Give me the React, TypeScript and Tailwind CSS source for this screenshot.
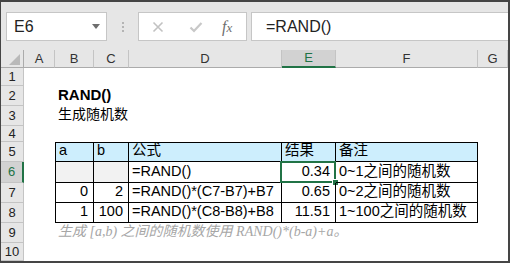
import React from 'react'

const cols = ['A', 'B', 'C', 'D', 'E', 'F', 'G']

// cell styles
const hdr = 'flex items-center justify-center border-r border-b border-[#c4c4c4] bg-[#e6e6e6] text-[13px] text-[#333]'
const rowHdr = 'flex items-center justify-center border-r border-b border-[#c4c4c4] bg-[#e6e6e6] text-[13px] text-[#222]'
const td = 'relative flex items-end pb-[2px] px-[3px] border-r border-b border-black whitespace-nowrap leading-[17px]'
const num = 'justify-end pr-[5px]'

function RowHeader({ n, active }: { n: number; active?: boolean }) {
  if (active) {
    return (
      <div className="flex items-center justify-center border-r-2 border-r-[#217346] border-b border-b-[#c4c4c4] bg-[#d2d2d2] text-[13px] text-[#217346]">
        {n}
      </div>
    )
  }
  return <div className={rowHdr}>{n}</div>
}

export default function App() {
  return (
    <div className="w-[510px] h-[263px] overflow-hidden border-t-2 border-l border-r-2 border-b-2 border-[#454545] bg-white font-['Liberation_Sans','Noto_Sans_CJK_SC',sans-serif] text-black">
      {/* formula bar */}
      <div className="h-[48px] bg-[#e6e6e6] flex items-start pl-[5px] pt-[10px]">
        <div className="w-[101px] h-[29px] bg-white border border-[#c6c6c6] flex items-center justify-between pl-[7px] pr-[6px]">
          <span className="text-[16px] text-[#222] leading-none">E6</span>
          <svg width="8" height="5" viewBox="0 0 8 5"><polygon points="0,0 8,0 4,5" fill="#6e6e6e" /></svg>
        </div>
        <div className="w-[31px] h-[29px] flex flex-col items-center justify-center gap-[2px]">
          <div className="w-[2px] h-[2px] bg-[#b4b4b4]" />
          <div className="w-[2px] h-[2px] bg-[#b4b4b4]" />
          <div className="w-[2px] h-[2px] bg-[#b4b4b4]" />
        </div>
        <div className="w-[109px] h-[29px] bg-white border border-[#c6c6c6] flex items-center pl-[13px]">
          <svg width="12" height="12" viewBox="0 0 12 12" className="mr-[25px]">
            <path d="M1.5 1.5 L10.5 10.5 M10.5 1.5 L1.5 10.5" stroke="#c2c2c2" strokeWidth="1.6" fill="none" />
          </svg>
          <svg width="14" height="12" viewBox="0 0 14 12" className="mr-[19px]">
            <path d="M1.5 6.5 L5 10 L12.5 2" stroke="#c8c8c8" strokeWidth="2.2" fill="none" />
          </svg>
          <span className="font-['Liberation_Serif',serif] italic text-[16px] text-[#6e6e6e] leading-none">
            f<span className="text-[13px]">x</span>
          </span>
        </div>
        <div className="flex-1 h-[29px] ml-[4px] bg-white border border-r-0 border-[#c6c6c6] flex items-center pl-[14px]">
          <span className="text-[16px] text-[#222] leading-none">=RAND()</span>
        </div>
      </div>

      {/* sheet */}
      <div className="grid grid-cols-[23px_31px_39px_35px_153px_54px_142px_30px] grid-rows-[18px_18px_20px_20px_16px_20px_21px_20px_20px_20px_18px] text-[14.5px]">
        {/* column headers */}
        <div className="relative border-r border-b border-[#ababab] bg-[#e6e6e6]">
          <svg width="11" height="11" viewBox="0 0 11 11" className="absolute right-[3px] bottom-[2px]">
            <polygon points="11,0 11,11 0,11" fill="#b9b9b9" />
          </svg>
        </div>
        {cols.map((c) =>
          c === 'E' ? (
            <div key={c} className="flex items-center justify-center border-r border-[#c4c4c4] border-b-2 border-b-[#217346] bg-[#d2d2d2] text-[13px] text-[#217346]">
              {c}
            </div>
          ) : (
            <div key={c} className={`${hdr} border-b-[#ababab]`}>{c}</div>
          )
        )}

        {/* row 1 */}
        <RowHeader n={1} />
        <div className="col-span-7" />

        {/* row 2 */}
        <RowHeader n={2} />
        <div />
        <div className="col-span-6 flex items-end pb-[3px] px-[3px] leading-[17px] font-bold text-[15px]">RAND()</div>

        {/* row 3 */}
        <RowHeader n={3} />
        <div />
        <div className="col-span-6 flex items-end pb-[3px] px-[3px] leading-[17px] text-[14px]">生成随机数</div>

        {/* row 4 */}
        <RowHeader n={4} />
        <div className="col-span-7" />

        {/* row 5 */}
        <RowHeader n={5} />
        <div />
        <div className={`${td} border-l border-t bg-[#cdeefd]`}>a</div>
        <div className={`${td} border-t bg-[#cdeefd]`}>b</div>
        <div className={`${td} border-t bg-[#cdeefd]`}>公式</div>
        <div className={`${td} border-t bg-[#cdeefd]`}>结果</div>
        <div className={`${td} border-t bg-[#cdeefd]`}>备注</div>
        <div />

        {/* row 6 */}
        <RowHeader n={6} active />
        <div />
        <div className={`${td} border-l bg-[#f2f2f2]`} />
        <div className={`${td} bg-[#f2f2f2]`} />
        <div className={td}>=RAND()</div>
        <div className={`${td} ${num}`}>
          0.34
          <div className="absolute -left-[2px] -top-[1px] -right-[1px] -bottom-[1px] border-2 border-[#217346]" />
          <div className="absolute -right-[4px] -bottom-[4px] w-[7px] h-[7px] bg-[#217346] border border-white" />
        </div>
        <div className={td}>0~1之间的随机数</div>
        <div />

        {/* row 7 */}
        <RowHeader n={7} />
        <div />
        <div className={`${td} border-l ${num}`}>0</div>
        <div className={`${td} ${num}`}>2</div>
        <div className={td}>=RAND()*(C7-B7)+B7</div>
        <div className={`${td} ${num}`}>0.65</div>
        <div className={td}>0~2之间的随机数</div>
        <div />

        {/* row 8 */}
        <RowHeader n={8} />
        <div />
        <div className={`${td} border-l ${num}`}>1</div>
        <div className={`${td} ${num}`}>100</div>
        <div className={td}>=RAND()*(C8-B8)+B8</div>
        <div className={`${td} ${num}`}>11.51</div>
        <div className={td}>1~100之间的随机数</div>
        <div />

        {/* row 9 */}
        <RowHeader n={9} />
        <div />
        <div className="col-span-6 flex items-end pb-[3px] px-[3px] leading-[17px] whitespace-nowrap italic text-[14px] text-[#a6a6a6] font-['Liberation_Serif','Noto_Sans_CJK_SC',serif]">
          生成 [a,b) 之间的随机数使用 RAND()*(b-a)+a。
        </div>

        {/* row 10 */}
        <RowHeader n={10} />
        <div className="col-span-7" />
      </div>
    </div>
  )
}
